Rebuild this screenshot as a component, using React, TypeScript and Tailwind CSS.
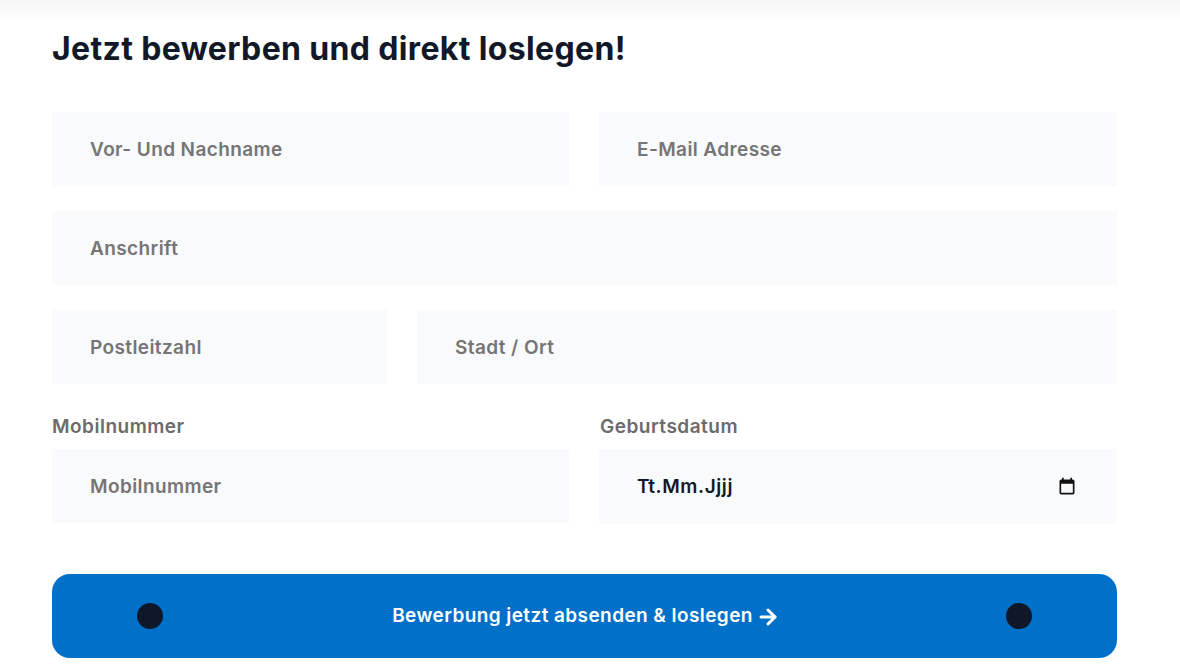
import React from 'react';
import { ArrowRight } from 'lucide-react';

const fieldClass =
  'h-[74px] w-full bg-[#f9fafc] px-[38px] text-[19px] font-semibold tracking-[0.4px] text-[#111827] placeholder:text-[#757575] outline-none';

const labelClass =
  'mb-[9px] block text-[19px] leading-[26px] font-semibold tracking-[0.5px] text-[#6b6b6b]';

const App = () => {
  return (
    <div className="h-[670px] w-[1180px] overflow-hidden bg-white font-['Inter',sans-serif]">
      {/* shadow of the header above */}
      <div className="h-[24px] bg-gradient-to-b from-[#f6f6f6] to-white" />

      <form className="pl-[52px] pr-[63px]">
        <h2 className="mt-[5px] text-[32px] leading-[40px] font-bold tracking-[0.35px] text-[#111827]">
          Jetzt bewerben und direkt loslegen!
        </h2>

        <div className="mt-[43px] grid grid-cols-[517px_1fr] gap-x-[30px]">
          <input className={fieldClass} placeholder="Vor- Und Nachname" />
          <input className={fieldClass} placeholder="E-Mail Adresse" />
        </div>

        <div className="mt-[25px]">
          <input className={fieldClass} placeholder="Anschrift" />
        </div>

        <div className="mt-[25px] grid grid-cols-[335px_1fr] gap-x-[30px]">
          <input className={fieldClass} placeholder="Postleitzahl" />
          <input className={fieldClass} placeholder="Stadt / Ort" />
        </div>

        <div className="mt-[30px] grid grid-cols-[517px_1fr] gap-x-[30px]">
          <div>
            <label className={labelClass}>Mobilnummer</label>
            <input className={fieldClass} placeholder="Mobilnummer" />
          </div>
          <div>
            <label className={`${labelClass} pl-[1px]`}>Geburtsdatum</label>
            <div className="flex h-[75px] items-center justify-between bg-[#f9fafc] pl-[38px] pr-[40px] text-[19px] leading-[26px] font-semibold tracking-[0.6px] text-[#111827]">
              <span className="pt-[1px]">Tt.Mm.Jjjj</span>
              <svg width="20" height="20" viewBox="0 0 24 24" fill="#111">
                <path d="M19 3h-1V1h-2v2H8V1H6v2H5c-1.11 0-1.99.9-1.99 2L3 19c0 1.1.89 2 2 2h14c1.1 0 2-.9 2-2V5c0-1.1-.9-2-2-2zm0 16H5V8h14v11z" />
              </svg>
            </div>
          </div>
        </div>

        <button
          type="button"
          className="mt-[50px] flex h-[84px] w-full items-center justify-between rounded-[18px] bg-[#0070c9] px-[85px] text-[19px] font-semibold tracking-[0.42px] text-white"
        >
          <span className="h-[26px] w-[26px] rounded-full bg-[#0f172a]" />
          <span className="flex items-center gap-[3px] pl-[3px] pt-[1px]">
            Bewerbung jetzt absenden &amp; loslegen
            <ArrowRight size={24} strokeWidth={3} />
          </span>
          <span className="h-[26px] w-[26px] rounded-full bg-[#0f172a]" />
        </button>
      </form>
    </div>
  );
};

export default App;
